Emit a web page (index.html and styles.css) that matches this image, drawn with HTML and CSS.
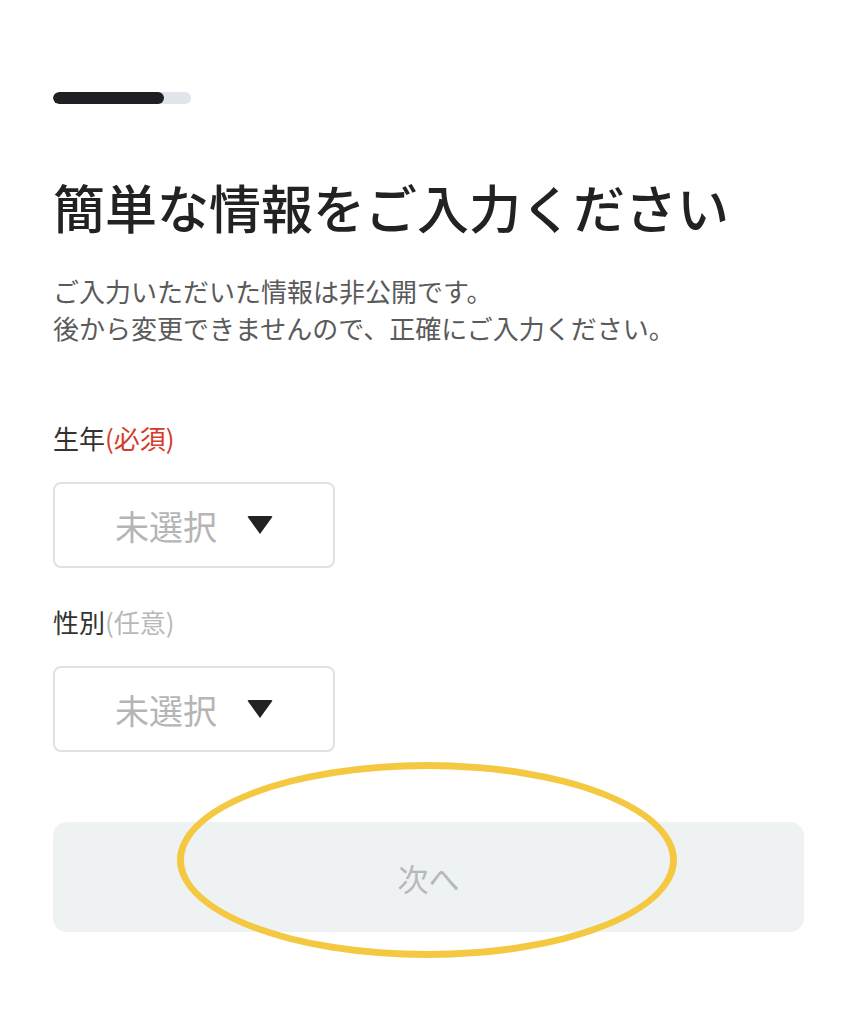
FILE: index.html
```html
<!DOCTYPE html>
<html lang="ja">
<head>
  <meta charset="UTF-8">
  <meta name="viewport" content="width=device-width, initial-scale=1.0">
  <title>簡単な情報をご入力ください</title>
  <link rel="stylesheet" href="styles.css">
</head>
<body>
  <div class="page">
    <div class="progress"><div class="progress-fill"></div></div>

    <h1 class="title">簡単な情報をご入力ください</h1>
    <p class="lead">ご入力いただいた情報は非公開です。<br>後から変更できませんので、正確にご入力ください。</p>

    <div class="field">
      <div class="label">生年<span class="required">(必須)</span></div>
      <div class="select">
        <span class="select-text">未選択</span>
        <span class="caret"></span>
      </div>
    </div>

    <div class="field">
      <div class="label">性別<span class="optional">(任意)</span></div>
      <div class="select">
        <span class="select-text">未選択</span>
        <span class="caret"></span>
      </div>
    </div>

    <div class="action">
      <button class="next" disabled>次へ</button>
      <div class="mark"></div>
    </div>
  </div>
</body>
</html>
```

FILE: styles.css
```css
body { margin: 0; background: #fff; font-family: "Noto Sans CJK JP", "Noto Sans", sans-serif; color: #222; }
.page { padding: 92px 53px 40px; }

.progress { width: 138px; height: 12px; border-radius: 6px; background: #e2e5ea; overflow: hidden; }
.progress-fill { width: 111px; height: 100%; border-radius: 6px; background: #1f2023; }

.title { margin: 67px 0 0; font-size: 52px; line-height: 72px; font-weight: 500; letter-spacing: 0; color: #222; white-space: nowrap; }
.lead { margin: 29px 0 0; font-size: 26px; line-height: 37px; color: #5a5a5a; }

.field { margin-top: 75px; }
.field + .field { margin-top: 37px; }
.label { font-size: 26px; line-height: 34px; color: #333; }
.required { color: #d63a2a; }
.optional { color: #b8b8b8; }

.select { margin-top: 27px; width: 282px; height: 86px; box-sizing: border-box; border: 2px solid #e1e1e1; border-radius: 8px; display: flex; align-items: center; justify-content: center; gap: 30px; }
.select-text { font-size: 34px; color: #b5b5b5; }
.caret { width: 0; height: 0; border-left: 13px solid transparent; border-right: 13px solid transparent; border-top: 18px solid #222; border-radius: 2px; }

.action { position: relative; margin-top: 70px; }
.next { display: block; width: 100%; height: 110px; border: 0; border-radius: 14px; background: #eff2f3; color: #b5b9bc; font-family: inherit; font-size: 31px; }
.mark { position: absolute; left: 124px; top: -60px; width: 500px; height: 196px; box-sizing: border-box; border: 7px solid #f5c842; border-radius: 50%; pointer-events: none; }
```
